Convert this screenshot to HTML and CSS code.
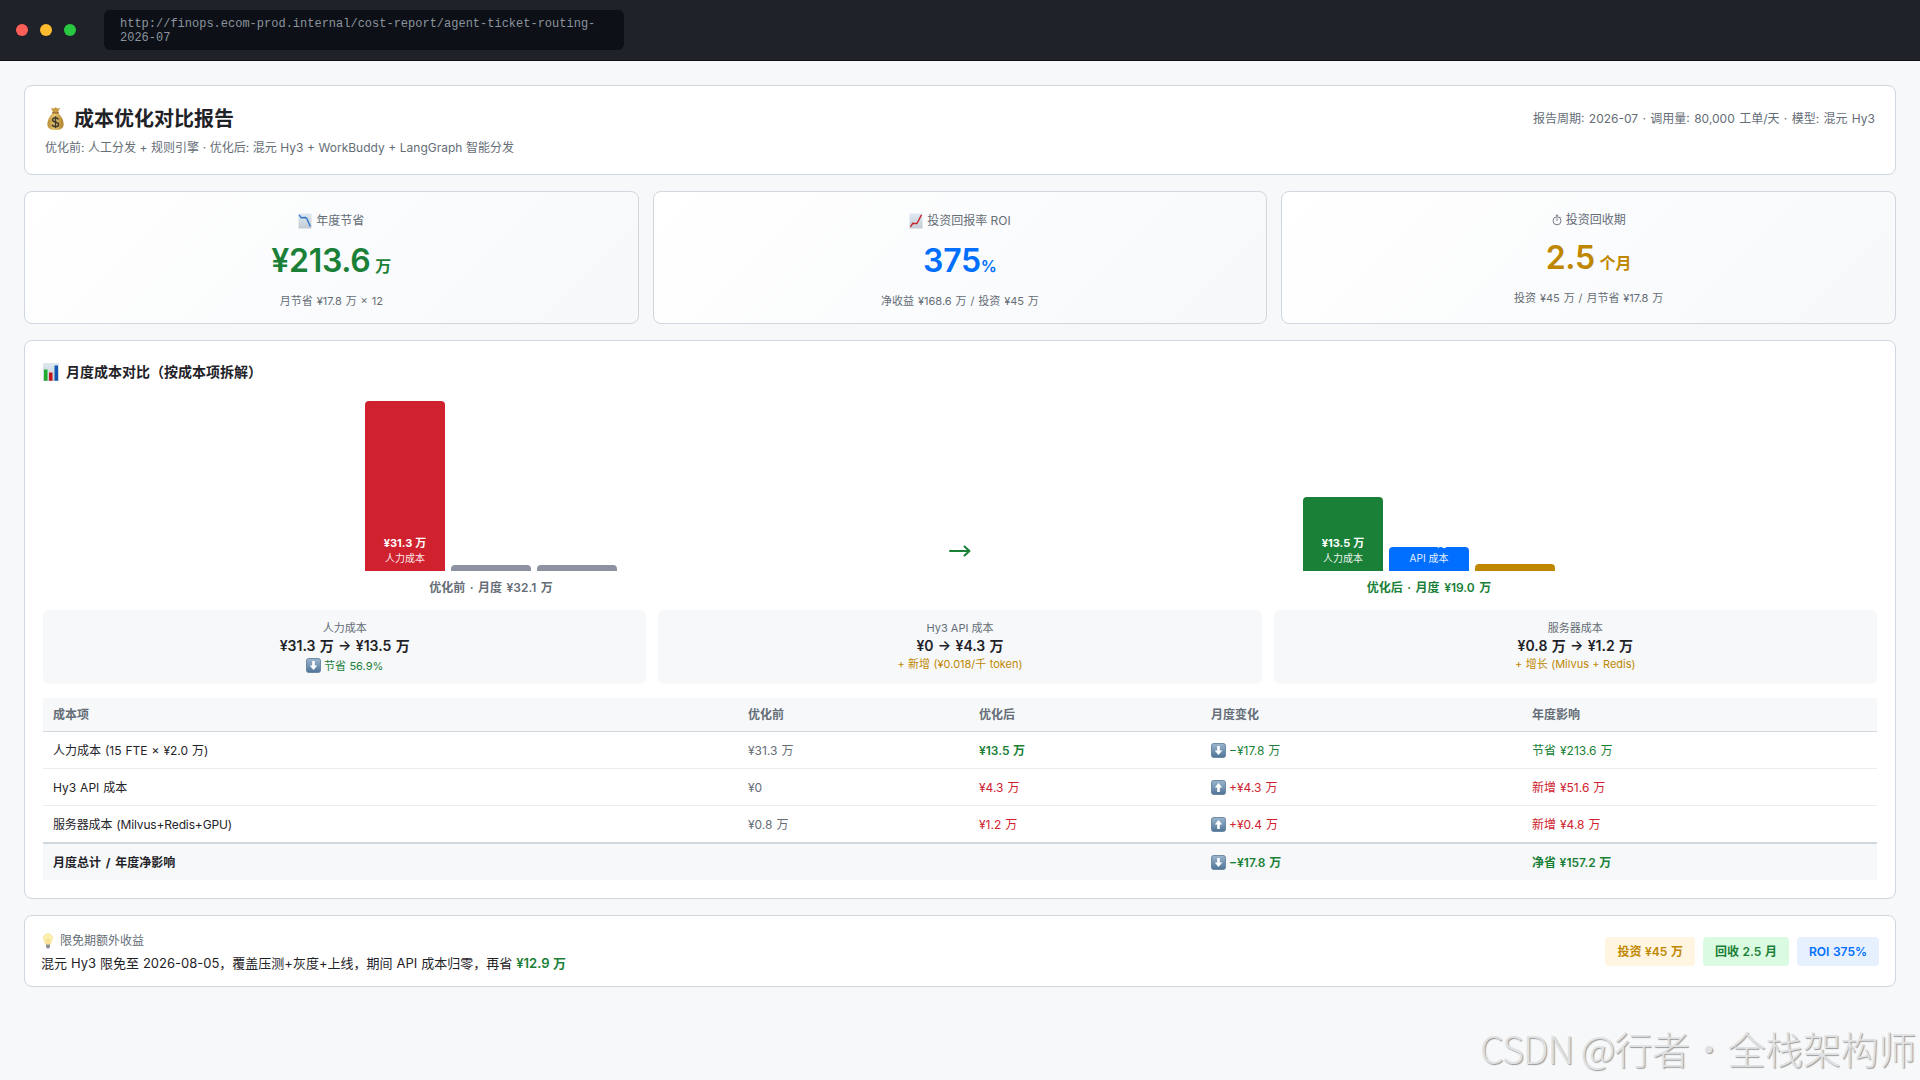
FILE: index.html
```html
<!DOCTYPE html>
<html lang="zh-CN">
<head>
    <meta charset="UTF-8">
    <meta name="viewport" content="width=device-width, initial-scale=1.0">
    <title>成本优化对比报告</title>
    <link rel="stylesheet" href="styles.css">
</head>
<body>

    <svg class="defs" width="0" height="0">
        <defs>
            <linearGradient id="keyBlue" x1="0" y1="0" x2="0" y2="1">
                <stop offset="0" stop-color="#9cb7cf"/>
                <stop offset="1" stop-color="#4f7396"/>
            </linearGradient>
            <linearGradient id="paper" x1="0" y1="0" x2="0" y2="1">
                <stop offset="0" stop-color="#dfe9f2"/>
                <stop offset="1" stop-color="#c3ccd4"/>
            </linearGradient>
            <linearGradient id="gold" x1="0" y1="0" x2="1" y2="0">
                <stop offset="0" stop-color="#b58a35"/>
                <stop offset="0.45" stop-color="#edcd72"/>
                <stop offset="1" stop-color="#a87b2c"/>
            </linearGradient>
        </defs>
        <symbol id="down" viewBox="0 0 16 16">
            <rect x="0.5" y="0.5" width="15" height="15" rx="2.5" fill="url(#keyBlue)" stroke="#66839f"/>
            <path d="M6.6 3.2h2.8v4.8H12L8 12.8 4 8h2.600z" fill="#fff"/>
        </symbol>
        <symbol id="up" viewBox="0 0 16 16">
            <rect x="0.5" y="0.5" width="15" height="15" rx="2.5" fill="url(#keyBlue)" stroke="#66839f"/>
            <path d="M6.6 12.8h2.8V8H12L8 3.2 4 8h2.600z" fill="#fff"/>
        </symbol>
    </svg>

    <div class="topbar">
        <span class="dot red"></span>
        <span class="dot yellow"></span>
        <span class="dot green"></span>
        <div class="url">http://finops.ecom-prod.internal/cost-report/agent-ticket-routing-2026-07</div>
    </div>

    <div class="page">
        <div class="card header">
            <div>
                <h1>
                    <svg class="icon-bag" viewBox="0 0 18 24">
                        <path d="M6.6 5.600L4.500.8l2.500.7L9 .3l2 1.200 2.500-.7-2.100 4.800z" fill="#c79c45"/>
                        <path d="M6.400 6h5.200c3.300 3 5.500 7 5.500 11 0 4-2.600 6-8.100 6s-8.100-2-8.100-6C.9 13 3.100 9 6.400 6z" fill="url(#gold)"/>
                        <path d="M6 5.800h6" stroke="#8a5a1c" stroke-width="1.300" stroke-linecap="round"/>
                        <path d="M11.900 12.500c-.4-1.100-1.500-1.700-2.900-1.700-1.700 0-2.900.9-2.900 2.200 0 3.100 6 1.400 6 4.400 0 1.400-1.300 2.300-3.100 2.300-1.700 0-3-.8-3.200-2.100M9 9.200v12" fill="none" stroke="#3f3a30" stroke-width="1.500"/>
                    </svg>
                    成本优化对比报告
                </h1>
                <p class="subtitle">优化前: 人工分发 + 规则引擎 · 优化后: 混元 Hy3 + WorkBuddy + LangGraph 智能分发</p>
            </div>
            <div class="meta">报告周期: 2026-07 · 调用量: 80,000 工单/天 · 模型: 混元 Hy3</div>
        </div>

        <div class="kpis">
            <div class="card kpi">
                <div class="kpi-label">
                    <svg class="icon-chart" viewBox="0 0 14 16">
                        <rect x="0.500" y="0.500" width="13" height="15" fill="url(#paper)"/>
                        <path d="M1.200 1.800l2 3 4.300-.3 1.300 1 3.500 8" fill="none" stroke="#2f74c8" stroke-width="1.400"/>
                    </svg>
                    年度节省
                </div>
                <div class="kpi-value text-green">¥213.6 <span>万</span></div>
                <div class="kpi-sub">月节省 ¥17.8 万 × 12</div>
            </div>
            <div class="card kpi">
                <div class="kpi-label">
                    <svg class="icon-chart" viewBox="0 0 14 16">
                        <rect x="0.500" y="0.500" width="13" height="15" fill="url(#paper)"/>
                        <path d="M1.500 13.800l2.300-3.500 4 .3 1.700-3 3-5.800" fill="none" stroke="#c9252d" stroke-width="1.400"/>
                    </svg>
                    投资回报率 ROI
                </div>
                <div class="kpi-value text-blue">375<span>%</span></div>
                <div class="kpi-sub">净收益 ¥168.6 万 / 投资 ¥45 万</div>
            </div>
            <div class="card kpi">
                <div class="kpi-label short">
                    <svg class="icon-watch" viewBox="0 0 10 12">
                        <circle cx="5" cy="6.800" r="4" fill="none" stroke="#656d76" stroke-width="0.900"/>
                        <path d="M5 7V4.200M3.800 1.200h2.400M5 1.200v1.600M8.200 2.700l.8.800" fill="none" stroke="#656d76" stroke-width="0.900"/>
                    </svg>
                    投资回收期
                </div>
                <div class="kpi-value text-amber">2.5 <span>个月</span></div>
                <div class="kpi-sub">投资 ¥45 万 / 月节省 ¥17.8 万</div>
            </div>
        </div>

        <div class="card report">
            <h2>
                <svg class="icon-bars" viewBox="0 0 16 18">
                    <rect width="16" height="18" fill="url(#paper)"/>
                    <rect x="1" y="6.500" width="3.500" height="11.200" fill="#1fae2b"/>
                    <rect x="6" y="9.500" width="3.500" height="8.200" fill="#c3161c"/>
                    <rect x="11.500" y="2.500" width="3.500" height="15.200" fill="#1257b0"/>
                </svg>
                月度成本对比（按成本项拆解）
            </h2>

            <div class="compare">
                <div class="side">
                    <div class="bars">
                        <div class="bar bar-red" style="height: 170px"><strong>¥31.3 万</strong><span>人力成本</span></div>
                        <div class="bar bar-gray" style="height: 6px"></div>
                        <div class="bar bar-gray" style="height: 6px"></div>
                    </div>
                    <div class="side-label">优化前 · 月度 ¥32.1 万</div>
                </div>
                <div class="arrow">
                    <svg width="22" height="12" viewBox="0 0 22 12">
                        <path d="M1 6h19.500M15.500 1.500l5 4.500-5 4.500" fill="none" stroke="#1a7f37" stroke-width="2" stroke-linecap="round" stroke-linejoin="round"/>
                    </svg>
                </div>
                <div class="side">
                    <div class="bars">
                        <div class="bar bar-green" style="height: 74px"><strong>¥13.5 万</strong><span>人力成本</span></div>
                        <div class="bar bar-blue" style="height: 24px"><strong>¥4.3 万</strong><span>API 成本</span></div>
                        <div class="bar bar-amber" style="height: 7px"></div>
                    </div>
                    <div class="side-label text-green">优化后 · 月度 ¥19.0 万</div>
                </div>
            </div>

            <div class="items">
                <div class="item">
                    <div class="item-label">人力成本</div>
                    <div class="item-value">¥31.3 万 → ¥13.5 万</div>
                    <div class="item-note tall text-green"><svg class="icon-key"><use href="#down"/></svg>节省 56.9%</div>
                </div>
                <div class="item">
                    <div class="item-label">Hy3 API 成本</div>
                    <div class="item-value">¥0 → ¥4.3 万</div>
                    <div class="item-note text-amber">+ 新增 (¥0.018/千 token)</div>
                </div>
                <div class="item">
                    <div class="item-label">服务器成本</div>
                    <div class="item-value">¥0.8 万 → ¥1.2 万</div>
                    <div class="item-note text-amber">+ 增长 (Milvus + Redis)</div>
                </div>
            </div>

            <table>
                <colgroup>
                    <col class="c1"><col class="c2"><col class="c3"><col class="c4"><col>
                </colgroup>
                <thead>
                    <tr><th>成本项</th><th>优化前</th><th>优化后</th><th>月度变化</th><th>年度影响</th></tr>
                </thead>
                <tbody>
                    <tr>
                        <td>人力成本 (15 FTE × ¥2.0 万)</td>
                        <td class="text-muted">¥31.3 万</td>
                        <td class="text-green bold">¥13.5 万</td>
                        <td class="text-green"><svg class="icon-key"><use href="#down"/></svg>−¥17.8 万</td>
                        <td class="text-green">节省 ¥213.6 万</td>
                    </tr>
                    <tr>
                        <td>Hy3 API 成本</td>
                        <td class="text-muted">¥0</td>
                        <td class="text-red">¥4.3 万</td>
                        <td class="text-red"><svg class="icon-key"><use href="#up"/></svg>+¥4.3 万</td>
                        <td class="text-red">新增 ¥51.6 万</td>
                    </tr>
                    <tr>
                        <td class="tight">服务器成本 (Milvus+Redis+GPU)</td>
                        <td class="text-muted">¥0.8 万</td>
                        <td class="text-red">¥1.2 万</td>
                        <td class="text-red"><svg class="icon-key"><use href="#up"/></svg>+¥0.4 万</td>
                        <td class="text-red">新增 ¥4.8 万</td>
                    </tr>
                    <tr class="total">
                        <td>月度总计 / 年度净影响</td>
                        <td></td>
                        <td></td>
                        <td class="text-green"><svg class="icon-key"><use href="#down"/></svg>−¥17.8 万</td>
                        <td class="text-green">净省 ¥157.2 万</td>
                    </tr>
                </tbody>
            </table>
        </div>

        <div class="card bonus">
            <div>
                <div class="bonus-label">
                    <svg class="icon-bulb" viewBox="0 0 12 16">
                        <path d="M6 .8c2.800 0 4.700 2 4.700 4.500 0 2.300-1.900 3.500-2.400 6H3.700c-.5-2.500-2.400-3.700-2.400-6C1.300 2.800 3.200.8 6 .8z" fill="#fdeeb0" stroke="#f3dc92" stroke-width="0.700"/>
                        <path d="M4.800 11V6.500l1.200 1 1.200-1V11" fill="none" stroke="#edc65c" stroke-width="0.600"/>
                        <path d="M4 11.500h4v2.500l-1.200 1.500H5.200L4 14z" fill="#8d8f91"/>
                    </svg>
                    限免期额外收益
                </div>
                <div class="bonus-text">混元 Hy3 限免至 2026-08-05，覆盖压测+灰度+上线，期间 API 成本归零，再省 <strong>¥12.9 万</strong></div>
            </div>
            <div class="badges">
                <span class="badge badge-amber">投资 ¥45 万</span>
                <span class="badge badge-green">回收 2.5 月</span>
                <span class="badge badge-blue">ROI 375%</span>
            </div>
        </div>
    </div>

    <div class="watermark"><span>CSDN @</span>行者·全栈架构师</div>

</body>
</html>
```
FILE: styles.css
```css
* {
    box-sizing: border-box;
    margin: 0;
    padding: 0;
}

body {
    font-family: Inter, "Noto Sans CJK SC", sans-serif;
    font-size: 12px;
    line-height: 16px;
    height: 1080px;
    overflow: hidden;
    background: #f6f8fa;
    color: #1f2328;
}

.defs {
    position: absolute;
}

.topbar {
    display: flex;
    align-items: center;
    gap: 12px;
    height: 61px;
    padding: 0 16px;
    background: #1f2229;
    border-bottom: 1px solid #0d1117;
}

.dot {
    width: 12px;
    height: 12px;
    border-radius: 50%;
}

.red { background: #ff5f57; }
.yellow { background: #febc2e; }
.green { background: #28c840; }

.url {
    width: 520px;
    margin-left: 16px;
    padding: 7px 16px 5px;
    border-radius: 6px;
    background: #0d1117;
    color: #8b949e;
    font-family: "Courier New", "Liberation Mono", monospace;
    font-size: 12px;
    line-height: 14px;
}

.page {
    display: flex;
    flex-direction: column;
    gap: 16px;
    padding: 24px;
}

.card {
    background: #fff;
    border: 1px solid #d0d7de;
    border-radius: 8px;
}

.header {
    display: flex;
    justify-content: space-between;
    height: 90px;
    padding: 20px;
}

h1 {
    display: flex;
    align-items: center;
    gap: 8px;
    font-size: 20px;
    line-height: 26px;
    font-weight: 700;
}

.subtitle {
    margin-top: 8px;
    color: #656d76;
    word-spacing: 0.2px;
}

.meta {
    margin-top: 5px;
    color: #656d76;
    word-spacing: 1px;
}

.kpis {
    display: grid;
    grid-template-columns: repeat(3, 1fr);
    gap: 14px;
}

.kpi {
    height: 133px;
    padding: 20px;
    text-align: center;
    background: linear-gradient(135deg, #fff, #f6f8fa);
}

.kpi-label {
    display: flex;
    justify-content: center;
    align-items: center;
    gap: 4px;
    height: 18px;
    color: #656d76;
}

.kpi-label.short {
    height: 15px;
}

.kpi-value {
    margin-top: 11px;
    font-size: 32px;
    line-height: 40px;
    font-weight: 600;
    letter-spacing: -0.3px;
    word-spacing: -3px;
}

.kpi-value span {
    font-size: 16px;
    letter-spacing: 0;
}

.kpi-sub {
    margin-top: 8px;
    font-size: 11px;
    line-height: 14px;
    color: #656d76;
    word-spacing: 0.8px;
}

.text-green { color: #1a7f37; }
.text-blue { color: #006eff; }
.text-amber { color: #bf8700; }
.text-red { color: #cf222e; }
.text-muted { color: #656d76; }
.bold { font-weight: 600; }

.report {
    height: 559px;
    padding: 18px;
}

h2 {
    display: flex;
    align-items: center;
    gap: 7px;
    height: 25px;
    font-size: 14px;
    font-weight: 700;
}

.compare {
    display: grid;
    grid-template-columns: 1fr 42px 1fr;
    margin-top: 17px;
}

.bars {
    display: flex;
    justify-content: center;
    align-items: flex-end;
    gap: 6px;
    height: 170px;
}

.bar {
    display: flex;
    flex-direction: column;
    justify-content: flex-end;
    align-items: center;
    width: 80px;
    border-radius: 4px 4px 0 0;
    overflow: hidden;
    color: #fff;
}

.bar strong {
    font-size: 11px;
    line-height: 16px;
    word-spacing: 0.5px;
}

.bar span {
    padding-bottom: 5px;
    font-size: 10px;
    line-height: 15px;
    opacity: 0.9;
}

.bar-red { background: #cf222e; }
.bar-gray { background: #8c92a0; }
.bar-green { background: #1a7f37; }
.bar-blue { background: #006eff; }
.bar-amber { background: #bf8700; }

.side-label {
    margin-top: 9px;
    text-align: center;
    font-weight: 600;
    color: #656d76;
    word-spacing: 1.5px;
}

.side-label.text-green {
    color: #1a7f37;
}

.arrow {
    display: flex;
    align-items: flex-end;
    justify-content: center;
    padding-bottom: 39px;
}

.items {
    display: grid;
    grid-template-columns: repeat(3, 1fr);
    gap: 12px;
    margin-top: 14px;
}

.item {
    height: 74px;
    padding: 10px;
    border-radius: 6px;
    background: #f6f8fa;
    text-align: center;
}

.item-label {
    font-size: 11px;
    color: #656d76;
}

.item-value {
    font-size: 14px;
    line-height: 20px;
    font-weight: 600;
    word-spacing: 0.8px;
}

.item-note {
    display: flex;
    justify-content: center;
    align-items: center;
    height: 15px;
    font-size: 11px;
    word-spacing: 0.3px;
}

.item-note.tall {
    height: 19px;
}

table {
    width: 100%;
    margin-top: 14px;
    border-collapse: separate;
    border-spacing: 0;
    table-layout: fixed;
}

.c1 { width: 695px; }
.c2 { width: 231px; }
.c3 { width: 232px; }
.c4 { width: 321px; }

th,
td {
    height: 37px;
    padding: 2px 10px 0;
    text-align: left;
    border-bottom: 1px solid #eaeef2;
    word-spacing: 0.6px;
}

th {
    height: 34px;
    padding-top: 1px;
    background: #f6f8fa;
    color: #656d76;
    font-weight: 600;
    border-bottom-color: #d0d7de;
}

tbody tr:nth-child(3) td {
    height: 36px;
    border-bottom: none;
}

td.tight {
    letter-spacing: -0.13px;
}

.total td {
    height: 38px;
    background: #f6f8fa;
    border-top: 2px solid #d0d7de;
    border-bottom: none;
    font-weight: 600;
}

.total td:first-child {
    font-weight: 700;
    word-spacing: 2px;
}

.bonus {
    display: flex;
    justify-content: space-between;
    align-items: center;
    height: 72px;
    padding: 0 16px;
}

.bonus-label {
    display: flex;
    align-items: center;
    gap: 5px;
    height: 22px;
    color: #656d76;
}

.bonus-text {
    margin-top: 1px;
    font-size: 13px;
    line-height: 20px;
    word-spacing: 0.3px;
}

.bonus-text strong {
    font-weight: 600;
    color: #1a7f37;
}

.badges {
    display: flex;
    gap: 8px;
}

.badge {
    height: 29px;
    padding: 0 12px;
    border-radius: 4px;
    line-height: 29px;
    font-weight: 600;
    word-spacing: 0.6px;
}

.badge-amber { background: #fff5e0; color: #bf8700; }
.badge-green { background: #dafbe1; color: #1a7f37; }
.badge-blue { background: #e6f0ff; color: #006eff; }

.icon-bag { width: 21px; height: 24px; }
.icon-chart { width: 14px; height: 16px; }
.icon-watch { width: 10px; height: 12px; }
.icon-bars { width: 16px; height: 18px; }
.icon-bulb { width: 14px; height: 16px; }

.icon-key {
    width: 15px;
    height: 15px;
    margin-right: 3px;
    vertical-align: -3px;
}

.watermark {
    position: absolute;
    right: 4px;
    bottom: 8px;
    font-family: "Noto Sans CJK SC", sans-serif;
    font-size: 38px;
    line-height: 48px;
    font-weight: 300;
    letter-spacing: -0.3px;
    color: #dfe1e3;
    text-shadow: 1px 1px 1px #999;
    white-space: nowrap;
}

.watermark span {
    letter-spacing: -1px;
}
```
